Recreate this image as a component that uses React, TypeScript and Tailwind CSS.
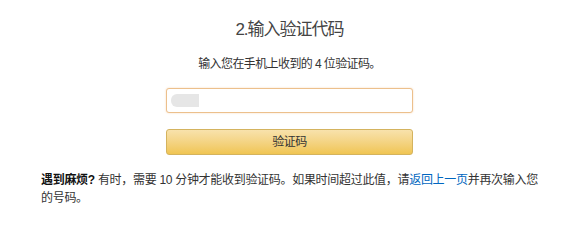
export default function App() {
  return (
    <div
      className="w-[586px] h-[222px] bg-white text-[#333]"
      style={{ fontFamily: '"Liberation Sans", "Noto Sans CJK SC", sans-serif' }}
    >
      {/* Top section */}
      <div className="flex flex-col items-center pt-[18px] pr-[7px]">
        <h1 className="text-[17px] leading-[24px] tracking-[-1px] text-[#444] font-normal">
          2.输入验证代码
        </h1>
        <p className="mt-[13px] text-[12px] leading-[18px] tracking-[-0.6px] text-[#333]">
          输入您在手机上收到的 4 位验证码。
        </p>
        <div className="mt-[15px] w-[247px] h-[25px] rounded-[3px] border border-[#ecc08c] shadow-[0_0_2px_rgba(228,121,17,0.3)] bg-white flex items-center px-[4px]">
          <div className="w-[28px] h-[13px] rounded-l-[6px] bg-[#e6e6e6] blur-[0.6px]" />
        </div>
        <button className="mt-[16px] w-[247px] h-[26px] rounded-[3px] border border-[#d4b35e] bg-gradient-to-b from-[#f8e2ac] to-[#f0c552] text-[12px] tracking-[-0.5px] text-[#333] flex items-center justify-center">
          验证码
        </button>
      </div>

      {/* Help text */}
      <p className="mt-[16px] pl-[41px] pr-[41px] text-[12px] leading-[18px] tracking-[-0.3px] text-[#333]">
        <b className="font-bold text-[#111]">遇到麻烦?</b> 有时，需要 10 分钟才能收到验证码。如果时间超过此值，请
        <a className="text-[#0066c0]">返回上一页</a>并再次输入您的号码。
      </p>
    </div>
  );
}
